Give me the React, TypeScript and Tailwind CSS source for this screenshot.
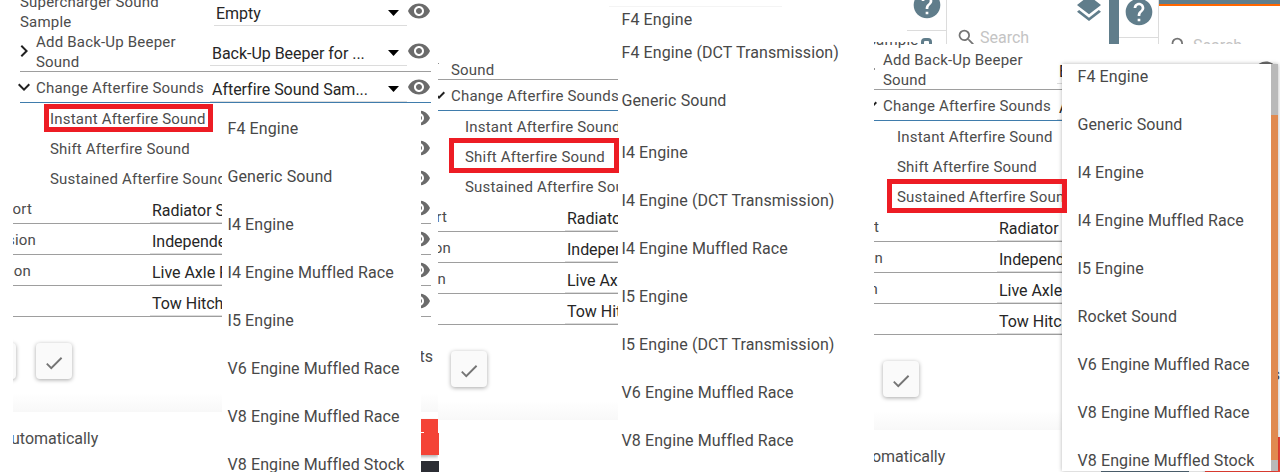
import type { ReactNode } from "react";
import { MdCheck, MdExpandMore, MdChevronRight, MdHelp, MdLayers, MdSearch, MdVisibility } from "react-icons/md";
import { twMerge } from "tailwind-merge";

const firstMenu = [
  "F4 Engine",
  "Generic Sound",
  "I4 Engine",
  "I4 Engine Muffled Race",
  "I5 Engine",
  "V6 Engine Muffled Race",
  "V8 Engine Muffled Race",
  "V8 Engine Muffled Stock",
];

const secondMenu = [
  { label: "F4 Engine", height: "h-[33px]" },
  { label: "F4 Engine (DCT Transmission)", height: "h-12" },
  { label: "Generic Sound", height: "h-[52px]" },
  { label: "I4 Engine", height: "h-12" },
  { label: "I4 Engine (DCT Transmission)", height: "h-12" },
  { label: "I4 Engine Muffled Race", height: "h-12" },
  { label: "I5 Engine", height: "h-12" },
  { label: "I5 Engine (DCT Transmission)", height: "h-12" },
  { label: "V6 Engine Muffled Race", height: "h-12" },
  { label: "V8 Engine Muffled Race", height: "h-12" },
];

const thirdMenu = [
  "F4 Engine",
  "Generic Sound",
  "I4 Engine",
  "I4 Engine Muffled Race",
  "I5 Engine",
  "Rocket Sound",
  "V6 Engine Muffled Race",
  "V8 Engine Muffled Race",
  "V8 Engine Muffled Stock",
];

const parts = [
  { label: "port", value: "Radiator Support", width: "w-[19px]" },
  { label: "sion", value: "Independent", width: "w-[23px]" },
  { label: "sion", value: "Live Axle Rear", width: "w-[18px]" },
  { label: "", value: "Tow Hitch", width: "w-[18px]" },
];

const Eye = ({ className = "" }: { className?: string }) => (
  <MdVisibility className={twMerge("size-6 shrink-0 text-[#6b6b6b]", className)} />
);

const Select = ({ children, className = "" }: { children: ReactNode; className?: string }) => (
  <div className={twMerge("flex h-[30px] shrink-0 items-start justify-between border-b border-[#dcdcdc] pl-0.5 pr-2 tracking-[-0.03px]", className)}>
    <span className="pt-1.5 text-base leading-6 text-[#262626]">{children}</span>
    <svg viewBox="0 0 11 6" className="mt-3.5 h-1.5 w-[11px]">
      <path d="M0 0h11L5.5 6z" fill="#000" />
    </svg>
  </div>
);

const Form = ({ className = "" }: { className?: string }) => (
  <div className={twMerge("w-[425px] whitespace-nowrap text-[15px] leading-5 tracking-[0.2px] text-[#4c4c4c]", className)}>
    <div className="ml-[7px] flex h-10 w-[411px]">
      <div className="w-[194px]">
        Supercharger Sound
        <br />
        Sample
      </div>
      <Select className="mt-1 w-[193px]">Empty</Select>
      <Eye className="mt-[7px]" />
    </div>
    <div className="ml-[7px] flex h-10 w-[411px] border-b border-[#9e9e9e]">
      <MdChevronRight className="-ml-2 mt-[7px] size-6 shrink-0 text-[#212121]" />
      <div className="w-[174px]">
        Add Back-Up Beeper
        <br />
        Sound
      </div>
      <Select className="mt-1 w-[197px]">Back-Up Beeper for ...</Select>
      <Eye className="mt-[7px]" />
    </div>
    <div className="ml-[7px] flex h-[31px] w-[411px] border-b border-[#3f7cac]">
      <MdExpandMore className="-ml-2 mt-[3px] size-6 shrink-0 text-[#212121]" />
      <div className="w-[174px] pt-1.5">Change Afterfire Sounds</div>
      <Select className="w-[197px]">Afterfire Sound Sam...</Select>
      <Eye className="mt-[3px]" />
    </div>
    {["Instant Afterfire Sound", "Shift Afterfire Sound", "Sustained Afterfire Sound"].map((label) => (
      <div key={label} className="flex h-[30px] w-[418px] items-start justify-between pl-[37px]">
        <span className="pt-1.5">{label}</span>
        <Eye className="mt-[3px]" />
      </div>
    ))}
    {parts.map((part) => (
      <div key={part.value} className="flex h-[31px] w-[418px] border-b border-[#9e9e9e]">
        <div className={twMerge("flex justify-end pt-1.5", part.width)}>{part.label}</div>
        <Select className="ml-auto w-[257px]">{part.value}</Select>
        <Eye className="mt-[3px]" />
      </div>
    ))}
    <div className="flex h-[95px] items-start bg-linear-to-b from-white from-80% to-[#f8f8f8] pt-[26px]">
      <div className="-ml-[33px] size-9 shrink-0 rounded-sm bg-[#fafafa] shadow-[0_1px_4px_rgba(0,0,0,0.35)]" />
      <div className="ml-5 flex size-9 shrink-0 items-center justify-center rounded-sm bg-[#fafafa] shadow-[0_1px_4px_rgba(0,0,0,0.35)]">
        <MdCheck className="mt-1 size-[22px] text-[#757575]" />
      </div>
      <span className="ml-auto mr-[5px] mt-1 text-base leading-5 tracking-normal">ts</span>
    </div>
    <div className="flex h-[70px] items-start justify-between bg-white">
      <span className="-ml-0.5 pt-[15px] text-base tracking-normal">utomatically</span>
      <div className="mt-[7px] flex gap-4">
        <div className="h-9 w-[88px] bg-[#546878]" />
        <div className="h-9 w-20 bg-[#f44336] shadow-[0_2px_3px_rgba(0,0,0,0.3)]" />
      </div>
    </div>
  </div>
);

const Option = ({ children, className = "" }: { children: ReactNode; className?: string }) => (
  <div className={twMerge("flex h-12 shrink-0 items-start whitespace-nowrap pt-[13px] text-base leading-6 tracking-[0.1px] text-[#484848]", className)}>
    {children}
  </div>
);

const Rail = ({ className = "" }: { className?: string }) => (
  <div className={twMerge("flex w-10 shrink-0 flex-col items-center border-r border-[#dcdcdc]", className)}>
    <MdHelp className="size-8 shrink-0 text-[#607d8b]" />
    <div className="mt-[9px] h-px w-full shrink-0 bg-[#dcdcdc]" />
    <div className="mt-[7px] h-3 w-[11px] shrink-0 rounded-sm border-[3px] border-[#607d8b]" />
  </div>
);

const Search = ({ className = "" }: { className?: string }) => (
  <div className={twMerge("flex items-center text-base text-[#c4c4c4]", className)}>
    <MdSearch className="mr-[3px] size-[21px] text-[#757575]" />
    Search
  </div>
);

export default function App() {
  return (
    <div className="flex h-[472px] w-[1280px] overflow-hidden bg-white" style={{ fontFamily: "Roboto, sans-serif" }}>
      <section className="relative h-full w-[438px] shrink-0 overflow-hidden">
        <div className="ml-[13px] h-full overflow-hidden">
          <Form className="-mt-2" />
        </div>
        <div className="absolute left-[421px] top-[432px] h-px w-[3px] bg-white" />
        <div className="absolute bottom-0 right-0 h-[11px] w-[17px] bg-[#2b2d33]" />
        <div className="absolute left-[222px] top-[104px] h-[368px] w-[199px] overflow-hidden bg-white pl-[5.5px]">
          {firstMenu.map((label) => (
            <Option key={label}>{label}</Option>
          ))}
        </div>
        <div className="absolute left-11 top-[104px] h-7 w-[169px] border-[5px] border-[#ed1c24]" />
      </section>

      <section className="relative flex h-full w-[436px] shrink-0 overflow-hidden">
        <div className="mt-[63px] h-[370px] w-[180px] shrink-0 overflow-hidden">
          <Form className="-ml-[10px] -mt-[63px]" />
        </div>
        <div className="h-full w-[256px] bg-white pl-[3.5px]">
          {secondMenu.map(({ label, height }) => (
            <Option key={label} className={twMerge("pt-2", height)}>
              {label}
            </Option>
          ))}
        </div>
        <div className="absolute left-0 top-[433px] h-[22px] w-px bg-[#f44336]" />
        <div className="absolute bottom-0 left-0 h-[11px] w-px bg-[#2b2d33]" />
        <div className="absolute left-[171px] top-1.5 h-px w-[173px] bg-[#f4f4f4]" />
        <div className="absolute left-[11px] top-[138px] h-[35px] w-[170px] border-[5px] border-[#ed1c24]" />
      </section>

      <section className="relative h-full w-[406px] shrink-0 overflow-hidden">
        <div className="relative z-10 flex h-11 overflow-hidden pl-[33px]">
          <Rail className="-mt-[11px] h-[60px]" />
          <div className="flex w-[162px] justify-between bg-white pl-[9px] pr-1">
            <Search className="h-[75px]" />
            <MdLayers className="-mt-[7px] size-8 text-[#607d8b]" />
          </div>
          <div className="w-2.5 shrink-0 bg-[#607d8b]" />
          <Rail className="-mt-1 h-[60px] bg-white" />
          <div className="grow bg-white">
            <div className="h-1.5 border-b-2 border-[#ff6600] bg-[#607d8b]" />
            <Search className="h-[79px] pl-2.5" />
          </div>
        </div>
        <div className="-mt-0.5 h-[430px] overflow-hidden">
          <Form className="-ml-[14px] -mt-8" />
        </div>
        <div className="absolute left-[188px] top-16 flex h-[407px] w-[216px] bg-white shadow-[0_0_4px_rgba(0,0,0,0.3)]">
          <div className="-mt-3 h-[419px] grow overflow-hidden pl-[15.5px]">
            {thirdMenu.map((label) => (
              <Option key={label}>{label}</Option>
            ))}
          </div>
          <div className="w-[7px] bg-[#b9b9b9] pt-[51px]">
            <div className="h-[345px] bg-[#e08a50]" />
          </div>
        </div>
        <div className="absolute left-[13px] top-[179px] h-[34px] w-[180px] border-[5px] border-[#ed1c24]" />
      </section>
    </div>
  );
}
